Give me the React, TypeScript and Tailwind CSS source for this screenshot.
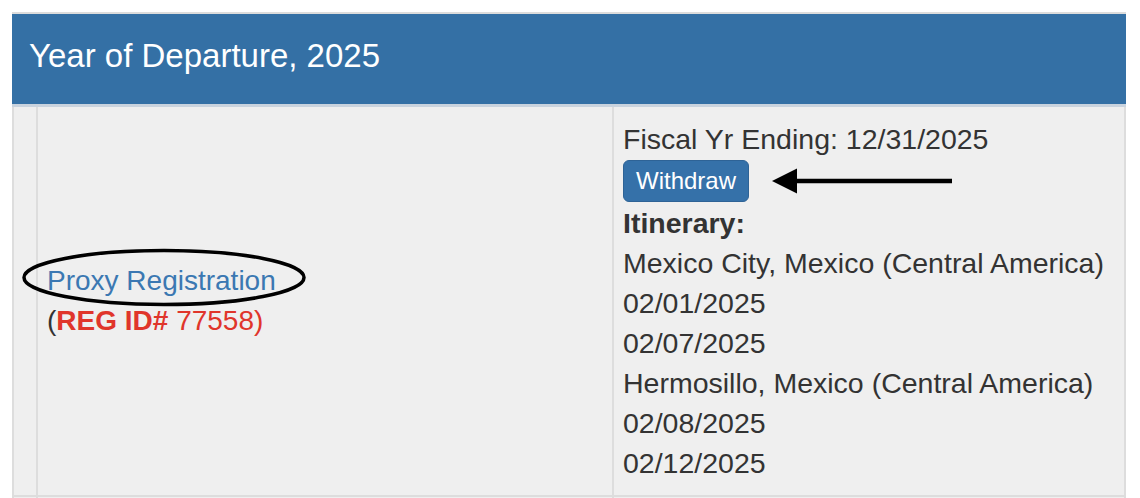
import React from 'react';

const font = { fontFamily: '"Liberation Sans", Arial, sans-serif' };

function Ellipse() {
  return (
    <svg
      className="absolute left-[-26px] top-[-13px] pointer-events-none"
      width="288"
      height="60"
      viewBox="0 0 288 60"
    >
      <ellipse cx="143" cy="29.5" rx="140" ry="27" fill="none" stroke="#000" strokeWidth="3.5" />
    </svg>
  );
}

function Arrow() {
  return (
    <svg
      className="absolute left-[157px] top-[60px] pointer-events-none"
      width="184"
      height="28"
      viewBox="0 0 184 28"
    >
      <line x1="22" y1="14" x2="181" y2="14" stroke="#000" strokeWidth="4.5" />
      <polygon points="1,14 26,1.5 26,26.5" fill="#000" />
    </svg>
  );
}

export default function App() {
  return (
    <div className="bg-white w-[1140px] h-[498px] overflow-hidden pt-[12px] pl-[12px] text-[#333]" style={font}>
      <div className="w-[1114px] border-t-2 border-[#dcdcdc]">
        <div className="h-[93px] bg-[#3470a5] pl-[17px] pt-[25px] border-b-[3px] border-[#c9d3de]">
          <h3 className="text-white text-[33px] leading-none">Year of Departure, 2025</h3>
        </div>

        <div className="flex border-x-2 border-b-2 border-[#dddddd] bg-[#efefef]">
          <div className="w-[24px] shrink-0 border-r-2 border-[#dddddd]" />
          <div className="w-[576px] shrink-0 border-r-2 border-[#dddddd] flex items-center pl-[9px]">
            <div className="text-[28px] leading-[40px]">
              <div className="relative inline-block">
                <a className="text-[#3b78b2]">Proxy Registration</a>
                <Ellipse />
              </div>
              <div>
                (<span className="text-[#e0352b]"><b>REG ID#</b> 77558)</span>
              </div>
            </div>
          </div>
          <div className="relative flex-1 pl-[9px] pt-[12px] pb-[12px] text-[28.5px] leading-[40px]">
            <div>Fiscal Yr Ending: 12/31/2025</div>
            <button className="my-[1px] block px-[12px] py-[2px] text-[24px] leading-[36px] text-white bg-[#3571a9] border border-[#2e6396] rounded-[6px]">
              Withdraw
            </button>
            <div className="font-bold">Itinerary:</div>
            <div>Mexico City, Mexico (Central America)</div>
            <div>02/01/2025</div>
            <div>02/07/2025</div>
            <div>Hermosillo, Mexico (Central America)</div>
            <div>02/08/2025</div>
            <div>02/12/2025</div>
            <Arrow />
          </div>
        </div>

        <div className="flex h-[20px] border-x-2 border-[#dddddd] bg-[#efefef]">
          <div className="w-[24px] shrink-0 border-r-2 border-[#dddddd]" />
          <div className="w-[576px] shrink-0 border-r-2 border-[#dddddd]" />
          <div className="flex-1" />
        </div>
      </div>
    </div>
  );
}
